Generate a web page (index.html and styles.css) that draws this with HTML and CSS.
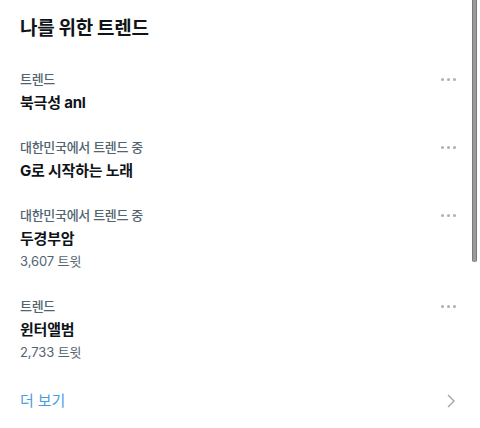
FILE: index.html
```html
<!DOCTYPE html>
<html lang="ko">
<head>
<meta charset="utf-8">
<link rel="stylesheet" href="styles.css">
</head>
<body>
<div class="panel">
  <h2 class="title">나를 위한 트렌드</h2>
  <div class="item">
    <div class="text">
      <div class="cat">트렌드</div>
      <div class="name">북극성 anl</div>
    </div>
    <div class="more"><span></span><span></span><span></span></div>
  </div>
  <div class="item">
    <div class="text">
      <div class="cat">대한민국에서 트렌드 중</div>
      <div class="name">G로 시작하는 노래</div>
    </div>
    <div class="more"><span></span><span></span><span></span></div>
  </div>
  <div class="item">
    <div class="text">
      <div class="cat">대한민국에서 트렌드 중</div>
      <div class="name">두경부암</div>
      <div class="count">3,607 트윗</div>
    </div>
    <div class="more"><span></span><span></span><span></span></div>
  </div>
  <div class="item">
    <div class="text">
      <div class="cat">트렌드</div>
      <div class="name">윈터앨범</div>
      <div class="count">2,733 트윗</div>
    </div>
    <div class="more"><span></span><span></span><span></span></div>
  </div>
  <div class="showmore">
    <span class="link">더 보기</span>
    <svg class="chev" width="10" height="16" viewBox="0 0 10 16"><path d="M2 2 L8 8 L2 14" fill="none" stroke="#9aa3aa" stroke-width="1.3"/></svg>
  </div>
  <div class="scrollbar"></div>
</div>
</body>
</html>
```
FILE: styles.css
```css
html, body {
  margin: 0;
  padding: 0;
  background: #ffffff;
}
body {
  font-family: "Inter", "Noto Sans CJK KR", "Noto Sans", sans-serif;
  color: #0f1419;
}
.panel {
  position: relative;
  width: 480px;
  height: 428px;
  overflow: hidden;
}
.title {
  margin: 0;
  padding: 16px 20px 15px;
  font-size: 19px;
  line-height: 26px;
  font-weight: 700;
  letter-spacing: -0.3px;
}
.item {
  display: flex;
  justify-content: space-between;
  align-items: flex-start;
  padding: 11px 24px 11px 20px;
}
.text {
  display: flex;
  flex-direction: column;
}
.cat, .count {
  font-size: 13px;
  line-height: 23px;
  color: #536471;
  font-weight: 500;
  letter-spacing: -0.3px;
}
.count {
  font-weight: 400;
  letter-spacing: -0.1px;
}
.name {
  font-size: 15px;
  line-height: 23px;
  font-weight: 700;
  letter-spacing: -0.2px;
}
.more {
  display: flex;
  gap: 3px;
  padding-top: 10px;
}
.more span {
  width: 3px;
  height: 3px;
  border-radius: 50%;
  background: #a9b0b6;
}
.showmore {
  display: flex;
  justify-content: space-between;
  align-items: center;
  padding: 15px 24px 16px 20px;
}
.link {
  font-size: 15px;
  line-height: 22px;
  color: #4a9be0;
  letter-spacing: -0.1px;
}
.scrollbar {
  position: absolute;
  top: 0;
  right: 3px;
  width: 3px;
  height: 262px;
  background: #9a9a9a;
  border-left: 1px solid #7a7a7a;
  border-right: 1px solid #7a7a7a;
  border-radius: 0 0 2px 2px;
}
```
